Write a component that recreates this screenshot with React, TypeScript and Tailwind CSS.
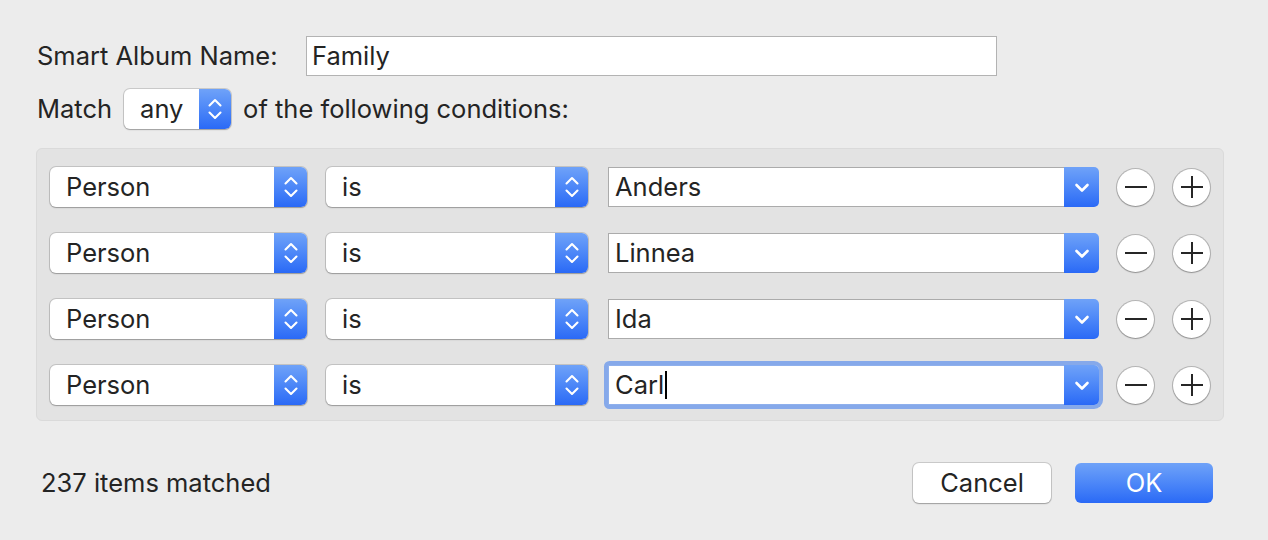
import React from "react";

const font = { fontFamily: "Inter, 'Noto Sans', sans-serif" };

function UpDown() {
  return (
    <svg width="14" height="24" viewBox="0 0 14 24" fill="none" stroke="white" strokeWidth="2.1" strokeLinecap="round" strokeLinejoin="round">
      <path d="M1.5 8.5 L7 3 L12.5 8.5" />
      <path d="M1.5 15.5 L7 21 L12.5 15.5" />
    </svg>
  );
}

function Down() {
  return (
    <svg width="16" height="12" viewBox="0 0 16 12" fill="none" stroke="white" strokeWidth="2.6" strokeLinecap="round" strokeLinejoin="round">
      <path d="M2.5 3 L8 8.5 L13.5 3" />
    </svg>
  );
}

function Popup({ label, width }: { label: string; width: string }) {
  return (
    <div className={`flex h-[40px] ${width} rounded-[6px] bg-white shadow-[0_0_0_1px_rgba(0,0,0,0.14),0_1px_1.5px_rgba(0,0,0,0.22)]`}>
      <div className="flex flex-1 items-center pl-[16px] text-[25.5px] text-[#242424]">{label}</div>
      <div className="flex w-[33px] items-center justify-center rounded-r-[6px] bg-gradient-to-b from-[#6fa2f8] to-[#2a69f6]">
        <UpDown />
      </div>
    </div>
  );
}

function Combo({ label, focused }: { label: string; focused?: boolean }) {
  return (
    <div
      className={`flex h-[40px] w-[491px] rounded-r-[5px] ${
        focused ? "shadow-[0_0_0_4px_#86a9ea] rounded-l-[2px]" : ""
      }`}
    >
      <div
        className={`flex flex-1 items-center border border-r-0 bg-white pl-[6px] text-[25.5px] text-[#242424] ${
          focused ? "border-[#8fb0ec]" : "border-[#ababab]"
        }`}
      >
        <span>{label}</span>
        {focused && <span className="ml-[1px] inline-block h-[28px] w-[2px] bg-black" />}
      </div>
      <div className="flex w-[35px] items-center justify-center rounded-r-[5px] bg-gradient-to-b from-[#6fa2f8] to-[#2a69f6] pt-[1px]">
        <Down />
      </div>
    </div>
  );
}

function Circle({ plus }: { plus?: boolean }) {
  return (
    <div className="flex h-[37px] w-[37px] items-center justify-center rounded-full bg-white shadow-[0_0_0_1px_rgba(0,0,0,0.2),0_1px_1.5px_rgba(0,0,0,0.2)]">
      <svg width="24" height="24" viewBox="0 0 24 24" stroke="#262626" strokeWidth="2" fill="none">
        <path d="M1 12 H23" />
        {plus && <path d="M12 1 V23" />}
      </svg>
    </div>
  );
}

const names = ["Anders", "Linnea", "Ida", "Carl"];

export default function App() {
  return (
    <div className="h-[540px] w-[1268px] overflow-hidden bg-[#ececec] pt-[36px] text-[#242424]" style={font}>
      <div className="flex items-center pl-[37px]">
        <div className="w-[269px] text-[25.5px]">Smart Album Name:</div>
        <div className="flex h-[40px] w-[691px] items-center border border-[#b3b3b3] bg-white pl-[5px] text-[25.5px]">
          Family
        </div>
      </div>
      <div className="mt-[13px] flex items-center pl-[37px]">
        <div className="text-[25.5px]">Match</div>
        <div className="ml-[12px]">
          <div className="flex h-[40px] w-[107px] rounded-[6px] bg-white shadow-[0_0_0_1px_rgba(0,0,0,0.14),0_1px_1.5px_rgba(0,0,0,0.22)]">
            <div className="flex flex-1 items-center pl-[16px] text-[25.5px]">any</div>
            <div className="flex w-[32px] items-center justify-center rounded-r-[6px] bg-gradient-to-b from-[#6fa2f8] to-[#2a69f6]">
              <UpDown />
            </div>
          </div>
        </div>
        <div className="ml-[12px] text-[25.5px]">of the following conditions:</div>
      </div>
      <div className="ml-[36px] mt-[19px] flex h-[273px] w-[1188px] flex-col gap-[26px] rounded-[6px] border border-[#dadada] bg-[#e3e3e3] pl-[13px] pt-[18px]">
        {names.map((n, i) => (
          <div key={n} className="flex items-center">
            <Popup label="Person" width="w-[257px]" />
            <div className="ml-[19px]">
              <Popup label="is" width="w-[262px]" />
            </div>
            <div className="ml-[20px]">
              <Combo label={n} focused={i === 3} />
            </div>
            <div className="ml-[18px]">
              <Circle />
            </div>
            <div className="ml-[19px]">
              <Circle plus />
            </div>
          </div>
        ))}
      </div>
      <div className="mt-[42px] flex items-center pl-[41px] pr-[55px]">
        <div className="flex-1 text-[25.5px]">237 items matched</div>
        <button className="flex h-[40px] w-[138px] items-center justify-center rounded-[6px] bg-white text-[25.5px] text-[#242424] shadow-[0_0_0_1px_rgba(0,0,0,0.14),0_1px_1.5px_rgba(0,0,0,0.22)]">
          Cancel
        </button>
        <button className="ml-[24px] flex h-[40px] w-[138px] items-center justify-center rounded-[6px] bg-gradient-to-b from-[#6fa2f8] to-[#2a69f6] text-[25.5px] text-white">
          OK
        </button>
      </div>
    </div>
  );
}
